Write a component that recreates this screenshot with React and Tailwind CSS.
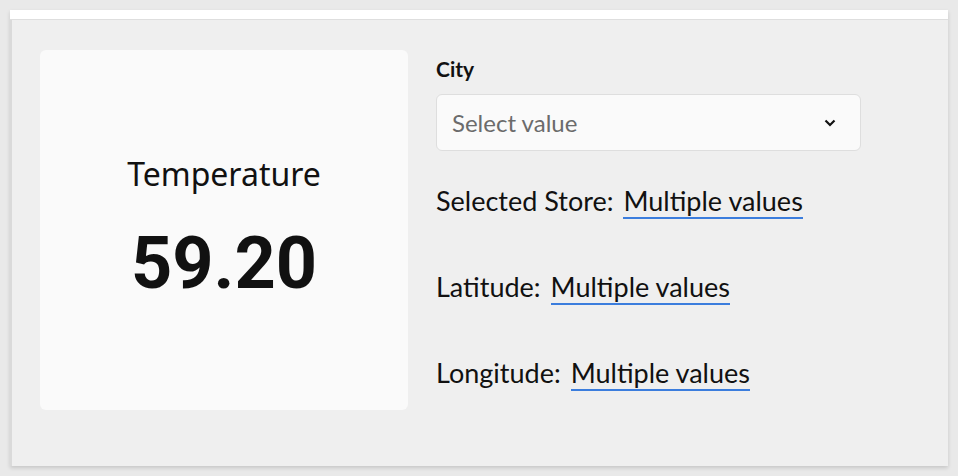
export default function App() {
  return (
    <div className="w-[958px] h-[476px] bg-[#e9e9e9] p-[10px] font-['Lato',sans-serif] text-[#111]">
      <div className="h-[456px] flex flex-col bg-[#efefef] shadow-[0_2px_4px_rgba(0,0,0,0.15)]">
        <div className="h-[10px] bg-white border-b border-[#dedede]" />
        <div className="flex-1 flex gap-[28px] pl-[28px] pt-[30px] border-l-2 border-[#dadada]">
          <div className="w-[368px] h-[360px] bg-[#fafafa] rounded-[6px] flex flex-col items-center justify-center">
            <div className="text-[32px] leading-none mt-[-2px] font-['Noto_Sans',sans-serif]">Temperature</div>
            <div className="text-[72px] leading-none font-bold font-['Roboto',sans-serif] mt-[38px]">59.20</div>
          </div>
          <div className="flex flex-col pt-[8px]">
            <div className="text-[21px] font-bold leading-none">City</div>
            <div className="mt-[15px] w-[425px] h-[57px] bg-[#fafafa] border border-[#dedede] rounded-[6px] flex items-center justify-between pl-[15px] pr-[24px]">
              <span className="text-[24px] text-[#6b6b6b]">Select value</span>
              <svg width="12" height="8" viewBox="0 0 12 8" fill="none">
                <path d="M1.5 1.5 L6 6 L10.5 1.5" stroke="#111" strokeWidth="2.2" />
              </svg>
            </div>
            <Row label="Selected Store:" className="mt-[36px]" />
            <Row label="Latitude:" className="mt-[54px]" />
            <Row label="Longitude:" className="mt-[54px]" />
          </div>
        </div>
      </div>
    </div>
  );
}

function Row({ label, className }) {
  return (
    <div className={"flex items-baseline text-[27px] leading-none " + className}>
      <span>{label}</span>
      <span className="ml-[10px] pb-[3px] border-b-2 border-[#3b7ddd]">Multiple values</span>
    </div>
  );
}
